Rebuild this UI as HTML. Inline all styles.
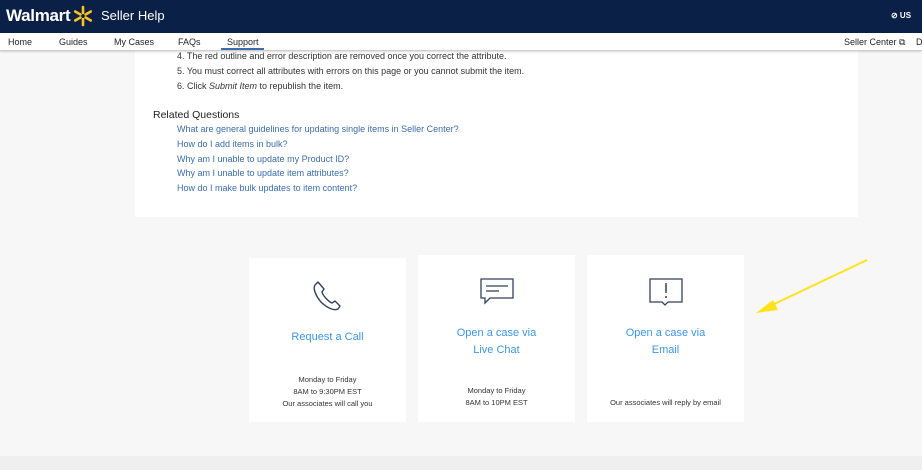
<!DOCTYPE html>
<html><head><style>
*{margin:0;padding:0;box-sizing:border-box}
body{width:922px;height:470px;overflow:hidden;background:#f7f7f7;font-family:"Liberation Sans",sans-serif;position:relative}
.hdr{position:absolute;left:0;top:0;width:922px;height:33px;background:#0b2046;color:#fff}
.nav{position:absolute;left:0;top:33px;width:922px;height:18px;background:#fff;border-bottom:1px solid #ccc;box-shadow:0 1px 2px rgba(0,0,0,.15);font-size:9px;color:#222;z-index:2}
.nav span{position:absolute;top:4px}
.panel{position:absolute;left:135px;top:40px;width:723px;height:177px;background:#fff}
.t{position:absolute;font-size:9px;color:#333;white-space:nowrap}
.l{position:absolute;font-size:9px;color:#3a6da8;white-space:nowrap;left:177px}
.card{position:absolute;background:#fff;width:157px;text-align:center}
.card .ti{position:absolute;left:0;width:100%;font-size:11px;color:#3d95e0;line-height:16.5px}
.card .sm{position:absolute;left:0;width:100%;font-size:7.5px;color:#333;line-height:12px}
.bot{position:absolute;left:0;top:456px;width:922px;height:14px;background:#efefef}
</style></head><body>
<div class="panel"></div>
<div class="t" style="left:177px;top:51px">4. The red outline and error description are removed once you correct the attribute.</div>
<div class="t" style="left:177px;top:66px">5. You must correct all attributes with errors on this page or you cannot submit the item.</div>
<div class="t" style="left:177px;top:81px">6. Click <i>Submit Item</i> to republish the item.</div>
<div class="t" style="left:153px;top:109px;font-size:10.5px;color:#222">Related Questions</div>
<div class="l" style="top:124px">What are general guidelines for updating single items in Seller Center?</div>
<div class="l" style="top:139px">How do I add items in bulk?</div>
<div class="l" style="top:154px">Why am I unable to update my Product ID?</div>
<div class="l" style="top:168px">Why am I unable to update item attributes?</div>
<div class="l" style="top:183px">How do I make bulk updates to item content?</div>

<div class="hdr">
<span style="position:absolute;left:6px;top:6px;font-size:17px;font-weight:bold;letter-spacing:-0.3px">Walmart</span>
<svg style="position:absolute;left:72px;top:5px" width="22" height="22" viewBox="-11 -11 22 22"><g stroke="#ffc220" stroke-width="2.6" stroke-linecap="round"><line x1="0" y1="-3" x2="0" y2="-9" transform="rotate(0)"/><line x1="0" y1="-3" x2="0" y2="-9" transform="rotate(60)"/><line x1="0" y1="-3" x2="0" y2="-9" transform="rotate(120)"/><line x1="0" y1="-3" x2="0" y2="-9" transform="rotate(180)"/><line x1="0" y1="-3" x2="0" y2="-9" transform="rotate(240)"/><line x1="0" y1="-3" x2="0" y2="-9" transform="rotate(300)"/></g></svg>
<span style="position:absolute;left:101px;top:8px;font-size:13px">Seller Help</span>
<span style="position:absolute;left:891px;top:11px;font-size:8px;font-weight:bold">⊘ US</span>
</div>
<div class="nav">
<span style="left:8px">Home</span><span style="left:59px">Guides</span><span style="left:114px">My Cases</span><span style="left:178px">FAQs</span><span style="left:227px">Support</span>
<div style="position:absolute;left:221px;top:15px;width:43px;height:2px;background:#3a6da8"></div>
<span style="left:844px">Seller Center ⧉</span><span style="left:916px">D</span>
</div>

<div class="card" style="left:249px;top:258px;height:164px">
<svg style="position:absolute;left:63px;top:22px" width="30" height="32" viewBox="0 0 30 32"><path d="M6 2 L3 5 C1 8 3 15 9 22 C15 28 22 31 26 29 L28 26 L23 21 L20 23 C17 22 11 16 10 12 L12 9 Z" fill="none" stroke="#33415c" stroke-width="1.4" stroke-linejoin="round"/></svg>
<div class="ti" style="top:71px">Request a Call</div>
<div class="sm" style="top:116px">Monday to Friday<br>8AM to 9:30PM EST<br>Our associates will call you</div>
</div>
<div class="card" style="left:418px;top:255px;height:167px">
<svg style="position:absolute;left:62px;top:23px" width="34" height="30" viewBox="0 0 34 30"><path d="M1 1 H33 V20 H10 L5 25 V20 H1 Z" fill="none" stroke="#33415c" stroke-width="1.3"/><line x1="6" y1="8" x2="28" y2="8" stroke="#33415c" stroke-width="1.3"/><line x1="6" y1="13" x2="19" y2="13" stroke="#33415c" stroke-width="1.3"/></svg>
<div class="ti" style="top:70px">Open a case via<br>Live Chat</div>
<div class="sm" style="top:130px">Monday to Friday<br>8AM to 10PM EST</div>
</div>
<div class="card" style="left:587px;top:255px;height:167px">
<svg style="position:absolute;left:62px;top:23px" width="34" height="30" viewBox="0 0 34 30"><path d="M1 1 H33 V24 H19 L16 27 L13 24 H1 Z" fill="none" stroke="#33415c" stroke-width="1.3"/><line x1="17" y1="5" x2="17" y2="15" stroke="#33415c" stroke-width="1.5"/><circle cx="17" cy="19" r="1" fill="#33415c"/></svg>
<div class="ti" style="top:70px">Open a case via<br>Email</div>
<div class="sm" style="top:142px">Our associates will reply by email</div>
</div>

<svg style="position:absolute;left:740px;top:250px" width="182" height="80"><line x1="127" y1="10" x2="30" y2="56" stroke="#ffe21a" stroke-width="2"/><polygon points="16,63 33,50 38,60" fill="#ffe21a"/></svg>
<div class="bot"></div>
</body></html>
